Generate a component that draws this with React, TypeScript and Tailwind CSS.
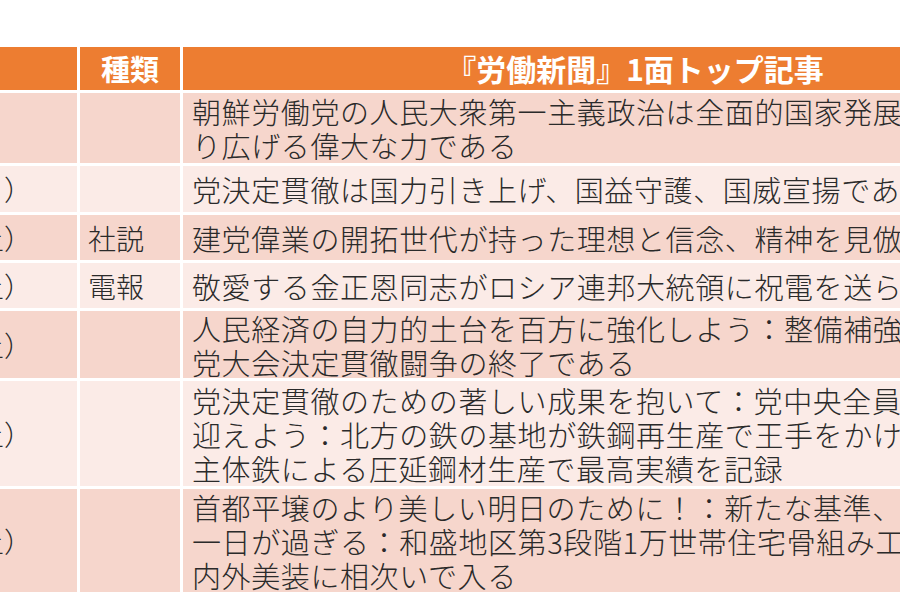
const rows = [
  { day: '', kind: '', lines: ['朝鮮労働党の人民大衆第一主義政治は全面的国家発展を繰', 'り広げる偉大な力である'], h: 'h-[70px]', bg: 'bg-[#f6d6cc]' },
  { day: '（日）', kind: '', lines: ['党決定貫徹は国力引き上げ、国益守護、国威宣揚である'], h: 'h-[46px]', bg: 'bg-[#fbebe7]' },
  { day: '（土）', kind: '社説', lines: ['建党偉業の開拓世代が持った理想と信念、精神を見倣おう'], h: 'h-[45px]', bg: 'bg-[#f6d6cc]' },
  { day: '（土）', kind: '電報', lines: ['敬愛する金正恩同志がロシア連邦大統領に祝電を送られた'], h: 'h-[45px]', bg: 'bg-[#fbebe7]' },
  { day: '（土）', kind: '', lines: ['人民経済の自力的土台を百方に強化しよう：整備補強戦略', '党大会決定貫徹闘争の終了である'], h: 'h-[67px]', bg: 'bg-[#f6d6cc]' },
  { day: '（土）', kind: '', lines: ['党決定貫徹のための著しい成果を抱いて：党中央全員会議を', '迎えよう：北方の鉄の基地が鉄鋼再生産で王手をかけた', '主体鉄による圧延鋼材生産で最高実績を記録'], h: 'h-[105px]', bg: 'bg-[#fbebe7]' },
  { day: '（土）', kind: '', lines: ['首都平壌のより美しい明日のために！：新たな基準、新たな', '一日が過ぎる：和盛地区第3段階1万世帯住宅骨組み工事', '内外美装に相次いで入る'], h: 'h-[103px]', bg: 'bg-[#f6d6cc]' },
];

export default function App() {
  return (
    <div className="h-[600px] w-[900px] overflow-hidden bg-white pt-[47px] font-['Noto_Sans_CJK_JP','Noto_Sans',sans-serif] text-[#2a2a2a]">
      <div className="grid w-[1090px] grid-cols-[77px_100px_904px] gap-[3px]">
        <div className="h-[43px] bg-[#ed7d31]" />
        <div className="flex h-[43px] items-center justify-center bg-[#ed7d31] text-[29px] font-bold text-white">種類</div>
        <div className="flex h-[43px] items-center justify-center bg-[#ed7d31] text-[30px] font-bold text-white">『労働新聞』1面トップ記事</div>

        {rows.map((row, i) => (
          <div key={i} className="contents">
            <div className={`${row.h} ${row.bg} flex items-center justify-end overflow-hidden whitespace-nowrap pr-[45px] text-[28px] font-light leading-[34px]`}>
              {row.day}
            </div>
            <div className={`${row.h} ${row.bg} flex items-center pl-[8px] text-[28px] font-light leading-[34px]`}>{row.kind}</div>
            <div className={`${row.h} ${row.bg} flex flex-col justify-center whitespace-nowrap pl-[9px] text-[29px] font-light leading-[34px] tracking-[0.6px]`}>
              {row.lines.map((line) => (
                <span key={line}>{line}</span>
              ))}
            </div>
          </div>
        ))}
      </div>
    </div>
  );
}
